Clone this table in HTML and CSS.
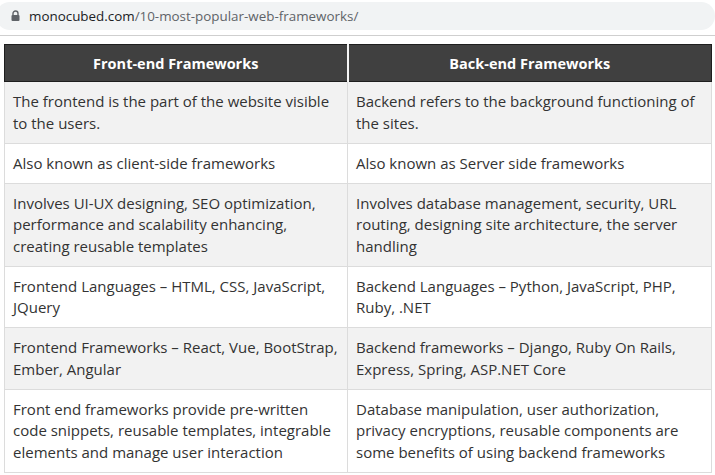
FILE: index.html
```html
<!DOCTYPE html>
<html>
<head>
<meta charset="utf-8">
<link rel="stylesheet" href="styles.css">
</head>
<body>
<div class="chrome">
  <div class="omnibox">
    <svg class="lock" width="9" height="11" viewBox="0 0 9 11"><path d="M2 5V3.5a2.5 2.5 0 0 1 5 0V5" fill="none" stroke="#5f6368" stroke-width="1.4"/><rect x="0.5" y="5" width="8" height="6" rx="1" fill="#5f6368"/></svg>
    <span class="host">monocubed.com</span><span class="path">/10-most-popular-web-frameworks/</span>
  </div>
</div>
<div class="rule"></div>
<table class="cmp">
  <colgroup><col class="c1"><col class="c2"></colgroup>
  <thead>
    <tr><th>Front-end Frameworks</th><th>Back-end Frameworks</th></tr>
  </thead>
  <tbody>
    <tr class="alt"><td>The frontend is the part of the website visible to the users.</td><td>Backend refers to the background functioning of the sites.</td></tr>
    <tr><td>Also known as client-side frameworks</td><td>Also known as Server side frameworks</td></tr>
    <tr class="alt"><td>Involves UI-UX designing, SEO optimization, performance and scalability enhancing, creating reusable templates</td><td>Involves database management, security, URL routing, designing site architecture, the server handling</td></tr>
    <tr><td>Frontend Languages – HTML, CSS, JavaScript, JQuery</td><td>Backend Languages – Python, JavaScript, PHP, Ruby, .NET</td></tr>
    <tr class="alt"><td>Frontend Frameworks – React, Vue, BootStrap, Ember, Angular</td><td>Backend frameworks – Django, Ruby On Rails, Express, Spring, ASP.NET Core</td></tr>
    <tr><td>Front end frameworks provide pre-written code snippets, reusable templates, integrable elements and manage user interaction</td><td>Database manipulation, user authorization, privacy encryptions, reusable components are some benefits of using backend frameworks</td></tr>
  </tbody>
</table>
</body>
</html>
```
FILE: styles.css
```css
html, body { margin: 0; padding: 0; background: #fff; }
body { width: 715px; height: 475px; overflow: hidden; }
.chrome { padding: 2px 0 0 0; height: 29px; }
.omnibox {
  height: 28px;
  background: #f1f3f4;
  border-radius: 14px;
  margin-left: -4px;
  display: flex;
  align-items: center;
  padding-left: 15px;
  font-family: "Open Sans", sans-serif;
  font-size: 13.4px;
}
.lock { margin-right: 9px; margin-top: -1px; }
.host { color: #202124; }
.path { color: #5f6368; }
.rule { margin-top: 4px; height: 1px; background: #cfcfcf; }
.cmp {
  margin: 8px 0 0 4px;
  width: 707px;
  border-collapse: collapse;
  table-layout: fixed;
  font-family: "Open Sans", sans-serif;
  font-size: 15px;
  color: #333;
}
.c1 { width: 343px; }
.c2 { width: 364px; }
.cmp th {
  background: #404040;
  color: #fff;
  font-weight: 700;
  height: 36px;
  padding: 0;
  border: 1px solid #1e1e1e;
  border-right: 2px solid #f4f4f4;
  text-align: center;
  font-size: 14.5px;
}
.cmp th:last-child { border-right: 1px solid #1e1e1e; }
.cmp td {
  padding: 9px 8px 8.5px 8px;
  line-height: 21.5px;
  border: 1px solid #dcdcdc;
  vertical-align: top;
  text-align: left;
}
.cmp tr.alt td { background: #f2f2f2; }
```
